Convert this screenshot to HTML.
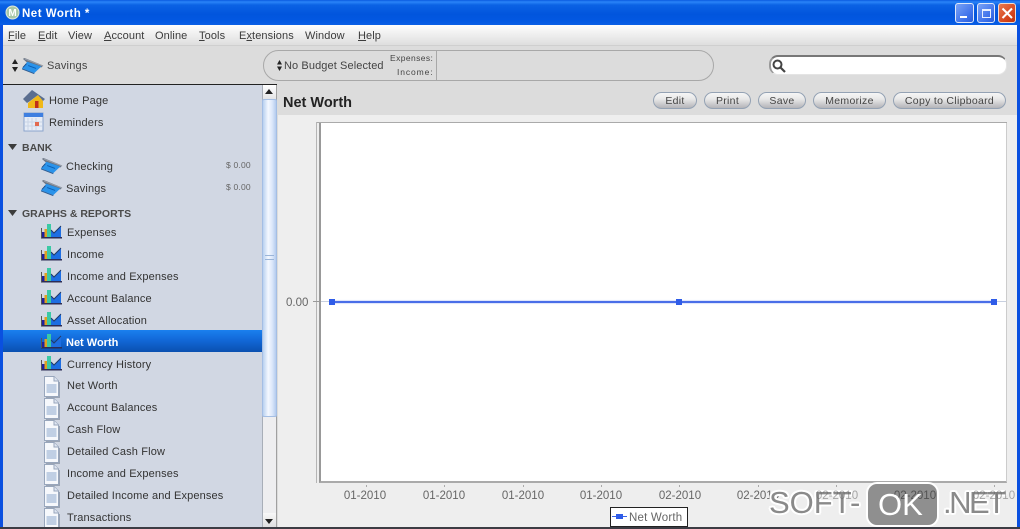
<!DOCTYPE html>
<html><head><meta charset="utf-8"><style>
html,body{margin:0;padding:0;width:1020px;height:529px;overflow:hidden;background:#dcdcdc}
body{font-family:"Liberation Sans",sans-serif;font-size:11px;color:#333}
#p{position:absolute;left:0;top:0;width:1020px;height:529px;overflow:hidden;filter:blur(.35px)}
.a{position:absolute}
.t{position:absolute;white-space:nowrap;line-height:14px}
.m{top:29px;color:#3c3c3c;font-size:11px;letter-spacing:.1px}
.s{left:66px;color:#333;font-size:11px;letter-spacing:.15px}
.h{left:22px;font-weight:bold;color:#4a4a4a;font-size:10.5px}
.b{position:absolute;top:92px;height:17px;box-sizing:border-box;border:1px solid #94a2b4;border-radius:9px;background:linear-gradient(#f6f6f6,#e8e8e8 40%,#b4b4b8);font-size:10.5px;line-height:16px;text-align:center;color:#444;letter-spacing:.3px}
.x{top:489px;color:#666;font-size:11.5px;width:60px;text-align:center}
.tk{position:absolute;top:485px;width:1px;height:2px;background:#aaa}
svg.i{position:absolute}
.w{position:absolute;color:#8a8a8a;font-size:31px;line-height:36px;white-space:nowrap;text-shadow:-2px 0 #fff,2px 0 #fff,0 -2px #fff,0 2px #fff,-1.5px -1.5px #fff,1.5px 1.5px #fff,-1.5px 1.5px #fff,1.5px -1.5px #fff}
</style></head><body><div id="p">
<svg width="0" height="0" style="position:absolute"><defs>
<g id="card" transform="scale(.88,.95)"><path d="M1 2L3 1L24 9L22 11L15 9L8 7L6 6Z" fill="#6a7484"/><path d="M3 2L24 9.5" stroke="#9aa0aa" fill="none"/><path d="M0 12L6 5L22 10L14 17Z" fill="#2a93ea"/><path d="M7 9L16 12" stroke="#0d5db0" fill="none"/><path d="M0 12.5L14 17.5" stroke="#2d5d95" fill="none"/><path d="M1 11L5 7" stroke="#1c4a86" fill="none"/></g>
<g id="chart"><rect x="0" y="14" width="21" height="1.5" fill="#2d2d55"/><rect x="0" y="5" width="1" height="10" fill="#555"/><path d="M10 14V7L13 10L20 3V14Z" fill="#1e6ee2"/><rect x="1" y="9" width="3" height="5" fill="#2020a0"/><rect x="3.5" y="6" width="2.5" height="8" fill="#e0a020"/><rect x="6" y="1" width="4" height="13" fill="#3bc9a4"/><path d="M10 7L13 10L20 3" stroke="#223a66" fill="none"/></g>
<g id="doc"><path d="M1.5 1.5H11L15.5 6V21.5H1.5Z" fill="#f6f8fc" stroke="#98a6bc"/><path d="M11 1.5V6H15.5" fill="#dfe6f2" stroke="#98a6bc"/><rect x="3.5" y="9" width="10" height="9" fill="#c0cfe4"/><path d="M3 22.5H16.5V7" stroke="#9aa4b4" fill="none"/></g>
</defs></svg>

<!-- title bar -->
<div class="a" style="left:0;top:0;width:1020px;height:25px;background:linear-gradient(#0a5be0 0,#2a84f8 2px,#0b62e4 5px,#0155dd 14px,#0258e2 21px,#0a5fe6 25px)"></div>
<svg class="i" style="left:5px;top:5px" width="15" height="15"><circle cx="7.5" cy="7.5" r="6.5" fill="#a8c8a8" stroke="#dfe8dc"/><text x="7.5" y="11" font-family="Liberation Sans" font-size="10" font-weight="bold" fill="#fff" text-anchor="middle">M</text></svg>
<div class="t" style="left:22px;top:7px;color:#fff;font-weight:bold;font-size:11.5px;letter-spacing:.5px">Net Worth *</div>
<div class="a" style="left:955px;top:3px;width:19px;height:20px;box-sizing:border-box;border:1px solid #dfe8fa;border-radius:3px;background:linear-gradient(135deg,#7aa2f6,#3c70ea 70%,#2a5cd8)"></div>
<div class="a" style="left:960px;top:16px;width:7px;height:2px;background:#fff"></div>
<div class="a" style="left:977px;top:3px;width:18px;height:20px;box-sizing:border-box;border:1px solid #dfe8fa;border-radius:3px;background:linear-gradient(135deg,#7aa2f6,#3c70ea 70%,#2a5cd8)"></div>
<div class="a" style="left:982px;top:9px;width:9px;height:9px;box-sizing:border-box;border:1px solid #e8f0ff;border-top-width:2px"></div>
<div class="a" style="left:998px;top:3px;width:18px;height:20px;box-sizing:border-box;border:1px solid #f0dcd0;border-radius:3px;background:linear-gradient(135deg,#e87a50,#d4421a 70%,#bc340c)"></div>
<svg class="i" style="left:998px;top:3px" width="18" height="20"><path d="M4.5 5.5L14 15M14 5.5L4.5 15" stroke="#fff" stroke-width="2"/></svg>

<!-- menu -->
<div class="a" style="left:3px;top:25px;width:1014px;height:21px;background:linear-gradient(#fdfdfd,#f4f4f4 30%,#dedede);border-bottom:1px solid #cfcfcf;box-sizing:border-box"></div>
<div class="t m" style="left:8px"><u>F</u>ile</div>
<div class="t m" style="left:38px"><u>E</u>dit</div>
<div class="t m" style="left:68px">View</div>
<div class="t m" style="left:104px"><u>A</u>ccount</div>
<div class="t m" style="left:155px">Online</div>
<div class="t m" style="left:199px"><u>T</u>ools</div>
<div class="t m" style="left:239px">E<u>x</u>tensions</div>
<div class="t m" style="left:305px">Window</div>
<div class="t m" style="left:358px"><u>H</u>elp</div>

<!-- toolbar -->
<svg class="i" style="left:12px;top:59px" width="6" height="13"><path d="M3 0L6 5H0ZM3 13L0 8H6Z" fill="#222"/></svg>
<svg class="i" style="left:22px;top:57px" width="22" height="18"><use href="#card"/></svg>
<div class="t" style="left:47px;top:59px;color:#444;letter-spacing:.2px">Savings</div>
<div class="a" style="left:263px;top:50px;width:451px;height:31px;box-sizing:border-box;border:1px solid #a8a8a8;border-radius:16px;background:#dcdcdc"></div>
<div class="a" style="left:436px;top:51px;width:1px;height:29px;background:#a8a8a8"></div>
<svg class="i" style="left:277px;top:60px" width="5" height="11"><path d="M2.5 0L5 4.5H0ZM2.5 11L0 6.5H5Z" fill="#222"/></svg>
<div class="t" style="left:284px;top:59px;color:#444;letter-spacing:.1px">No Budget Selected</div>
<div class="t" style="left:390px;top:51px;font-size:8.5px;color:#444;letter-spacing:.4px">Expenses:</div>
<div class="t" style="left:397px;top:65px;font-size:8.5px;color:#444;letter-spacing:.9px">Income:</div>
<div class="a" style="left:769px;top:55px;width:238px;height:20px;box-sizing:border-box;background:#fff;border:1px solid #e4e4e4;border-top:2px solid #777;border-left:2px solid #999;border-radius:9px"></div>
<svg class="i" style="left:771px;top:58px" width="16" height="16"><circle cx="6.5" cy="6.5" r="4" fill="none" stroke="#444" stroke-width="2"/><path d="M9.5 9.5L14 14" stroke="#444" stroke-width="2.2"/></svg>

<!-- sidebar -->
<div class="a" style="left:3px;top:84px;width:274px;height:443px;background:#d1d7e3;border-top:1px solid #222;box-sizing:border-box"></div>
<div class="a" style="left:3px;top:330px;width:259px;height:22px;background:linear-gradient(#1a80ee,#1268d8 45%,#0a50b0)"></div>

<svg class="i" style="left:22px;top:88px" width="24" height="22"><path d="M6 15L16 7L21 13V20H6Z" fill="#f0b818"/><rect x="13" y="13" width="3.5" height="7" fill="#c03018"/><path d="M1 11L10 2L23 11L21 13L16 7L8 13L5 15Z" fill="#5a6e90"/></svg>
<svg class="i" style="left:23px;top:112px" width="22" height="20"><rect x="1" y="1" width="19" height="18" fill="#e6ecf6" stroke="#8ca4cc"/><rect x="1" y="1" width="19" height="4" fill="#3f7fe0"/><path d="M5 6V18M9 6V18M13 6V18M2 10H19M2 14H19" stroke="#c8d4e6"/><rect x="12" y="10" width="4" height="4" fill="#e26a50"/></svg>
<div class="t s" style="left:49px;top:94px">Home Page</div>
<div class="t s" style="left:49px;top:116px">Reminders</div>

<svg class="i" style="left:8px;top:144px" width="10" height="7"><path d="M0 0H9L4.5 6Z" fill="#3c3c3c"/></svg>
<div class="t h" style="top:141px">BANK</div>
<svg class="i" style="left:41px;top:157px" width="22" height="18"><use href="#card"/></svg>
<div class="t s" style="top:160px">Checking</div>
<div class="t" style="left:226px;top:158px;font-size:8.5px;color:#666;letter-spacing:.2px">$ 0.00</div>
<svg class="i" style="left:41px;top:179px" width="22" height="18"><use href="#card"/></svg>
<div class="t s" style="top:182px">Savings</div>
<div class="t" style="left:226px;top:180px;font-size:8.5px;color:#666;letter-spacing:.2px">$ 0.00</div>

<svg class="i" style="left:8px;top:210px" width="10" height="7"><path d="M0 0H9L4.5 6Z" fill="#3c3c3c"/></svg>
<div class="t h" style="top:207px">GRAPHS &amp; REPORTS</div>

<svg class="i" style="left:41px;top:223px" width="22" height="17"><use href="#chart"/></svg><div class="t s" style="left:67px;top:225.5px">Expenses</div>
<svg class="i" style="left:41px;top:245px" width="22" height="17"><use href="#chart"/></svg><div class="t s" style="left:67px;top:247.5px">Income</div>
<svg class="i" style="left:41px;top:267px" width="22" height="17"><use href="#chart"/></svg><div class="t s" style="left:67px;top:269.5px">Income and Expenses</div>
<svg class="i" style="left:41px;top:289px" width="22" height="17"><use href="#chart"/></svg><div class="t s" style="left:67px;top:291.5px">Account Balance</div>
<svg class="i" style="left:41px;top:311px" width="22" height="17"><use href="#chart"/></svg><div class="t s" style="left:67px;top:313.5px">Asset Allocation</div>
<svg class="i" style="left:41px;top:333px" width="22" height="17"><use href="#chart"/></svg><div class="t s" style="left:66px;top:335.5px;color:#fff;font-weight:bold;letter-spacing:0">Net Worth</div>
<svg class="i" style="left:41px;top:355px" width="22" height="17"><use href="#chart"/></svg><div class="t s" style="left:67px;top:357.5px">Currency History</div>
<svg class="i" style="left:43px;top:375px" width="18" height="24"><use href="#doc"/></svg><div class="t s" style="left:67px;top:379px">Net Worth</div>
<svg class="i" style="left:43px;top:397px" width="18" height="24"><use href="#doc"/></svg><div class="t s" style="left:67px;top:401px">Account Balances</div>
<svg class="i" style="left:43px;top:419px" width="18" height="24"><use href="#doc"/></svg><div class="t s" style="left:67px;top:423px">Cash Flow</div>
<svg class="i" style="left:43px;top:441px" width="18" height="24"><use href="#doc"/></svg><div class="t s" style="left:67px;top:445px">Detailed Cash Flow</div>
<svg class="i" style="left:43px;top:463px" width="18" height="24"><use href="#doc"/></svg><div class="t s" style="left:67px;top:467px">Income and Expenses</div>
<svg class="i" style="left:43px;top:485px" width="18" height="24"><use href="#doc"/></svg><div class="t s" style="left:67px;top:489px">Detailed Income and Expenses</div>
<svg class="i" style="left:43px;top:507px" width="18" height="20"><use href="#doc"/></svg><div class="t s" style="left:67px;top:511px">Transactions</div>

<!-- scrollbar -->
<div class="a" style="left:262px;top:85px;width:15px;height:442px;background:#eeeef0;border-left:1px solid #a8aeb8;border-right:1px solid #a0a0a0;box-sizing:border-box"></div>
<div class="a" style="left:263px;top:85px;width:13px;height:14px;background:linear-gradient(#fff,#e4e4e6)"></div>
<svg class="i" style="left:265px;top:89px" width="8" height="5"><path d="M4 0L8 5H0Z" fill="#222"/></svg>
<div class="a" style="left:262px;top:99px;width:15px;height:318px;box-sizing:border-box;border:1px solid #a4bee4;border-radius:2px;background:linear-gradient(90deg,#b8d0f0,#f4f8ff 40%,#dce8fa 70%,#b4cbee)"></div>
<div class="a" style="left:265px;top:255px;width:9px;height:5px;border-top:1px solid #9ab4d8;border-bottom:1px solid #9ab4d8;box-sizing:border-box"></div>
<div class="a" style="left:263px;top:513px;width:13px;height:14px;background:linear-gradient(#f8f8f8,#dedee0)"></div>
<svg class="i" style="left:265px;top:519px" width="8" height="5"><path d="M0 0H8L4 5Z" fill="#222"/></svg>

<!-- right panel -->
<div class="a" style="left:278px;top:84px;width:739px;height:31px;background:#dcdcdc"></div>
<div class="a" style="left:278px;top:115px;width:739px;height:412px;background:#eeeeee"></div>
<div class="t" style="left:283px;top:95px;font-size:14.5px;line-height:16px;font-weight:bold;color:#222">Net Worth</div>
<div class="b" style="left:653px;width:44px">Edit</div>
<div class="b" style="left:704px;width:47px">Print</div>
<div class="b" style="left:758px;width:48px">Save</div>
<div class="b" style="left:813px;width:73px">Memorize</div>
<div class="b" style="left:893px;width:113px">Copy to Clipboard</div>

<!-- chart -->
<div class="a" style="left:316px;top:122px;width:691px;height:1px;background:#aaa"></div>
<div class="a" style="left:316px;top:122px;width:1px;height:361px;background:#b4b4b4"></div>
<div class="a" style="left:319px;top:123px;width:688px;height:360px;box-sizing:border-box;background:#fff;border-left:2px solid #999;border-bottom:2px solid #aaa;border-right:1px solid #ccc"></div>
<div class="a" style="left:313px;top:301px;width:7px;height:1px;background:#999"></div>
<div class="t" style="left:286px;top:296px;font-size:11.5px;color:#666">0.00</div>
<div class="a" style="left:321px;top:301px;width:685px;height:1px;background:#c8d0e0"></div>
<div class="a" style="left:332px;top:301px;width:662px;height:2px;background:#4a6ee8;box-shadow:0 0 1.5px #7f98ee"></div>
<div class="a" style="left:329px;top:299px;width:6px;height:6px;background:#2f5ce8"></div>
<div class="a" style="left:676px;top:299px;width:6px;height:6px;background:#2f5ce8"></div>
<div class="a" style="left:991px;top:299px;width:6px;height:6px;background:#2f5ce8"></div>

<div class="tk" style="left:366px"></div><div class="tk" style="left:444px"></div><div class="tk" style="left:523px"></div><div class="tk" style="left:601px"></div><div class="tk" style="left:679px"></div><div class="tk" style="left:758px"></div><div class="tk" style="left:836px"></div><div class="tk" style="left:915px"></div><div class="tk" style="left:994px"></div>
<div class="t x" style="left:335px">01-2010</div>
<div class="t x" style="left:414px">01-2010</div>
<div class="t x" style="left:493px">01-2010</div>
<div class="t x" style="left:571px">01-2010</div>
<div class="t x" style="left:650px">02-2010</div>
<div class="t x" style="left:728px">02-2010</div>

<!-- legend -->
<div class="a" style="left:610px;top:507px;width:78px;height:20px;box-sizing:border-box;background:#fff;border:1px solid #222"></div>
<div class="a" style="left:612px;top:516px;width:15px;height:1px;background:#3a62e8"></div>
<div class="a" style="left:616px;top:514px;width:7px;height:5px;background:#2f5ce8"></div>
<div class="t" style="left:629px;top:511px;font-size:11.5px;color:#666;letter-spacing:.2px">Net Worth</div>

<!-- watermark -->
<div class="w" style="left:769px;top:485px">SOFT-</div>
<div class="a" style="left:866px;top:482px;width:73px;height:45px;box-sizing:border-box;background:#8f8f8f;border:2px solid #fff;border-radius:11px"></div>
<div class="w" style="left:943px;top:485px;letter-spacing:-2.5px">.NET</div>
<div class="t x" style="left:807px;opacity:.55">02-2010</div>
<div class="t x" style="left:885px;opacity:.8;color:#444">02-2010</div>
<div class="t x" style="left:964px;opacity:.55">02-2010</div>
<div class="t" style="left:878px;top:487px;color:#fff;font-size:31px;line-height:36px">OK</div>

<!-- frame -->
<div class="a" style="left:0;top:25px;width:3px;height:504px;background:#0a50e0"></div>
<div class="a" style="left:1017px;top:25px;width:3px;height:504px;background:#0a50e0"></div>
<div class="a" style="left:0;top:527px;width:1020px;height:2px;background:#3c3c44"></div>
</div></body></html>
